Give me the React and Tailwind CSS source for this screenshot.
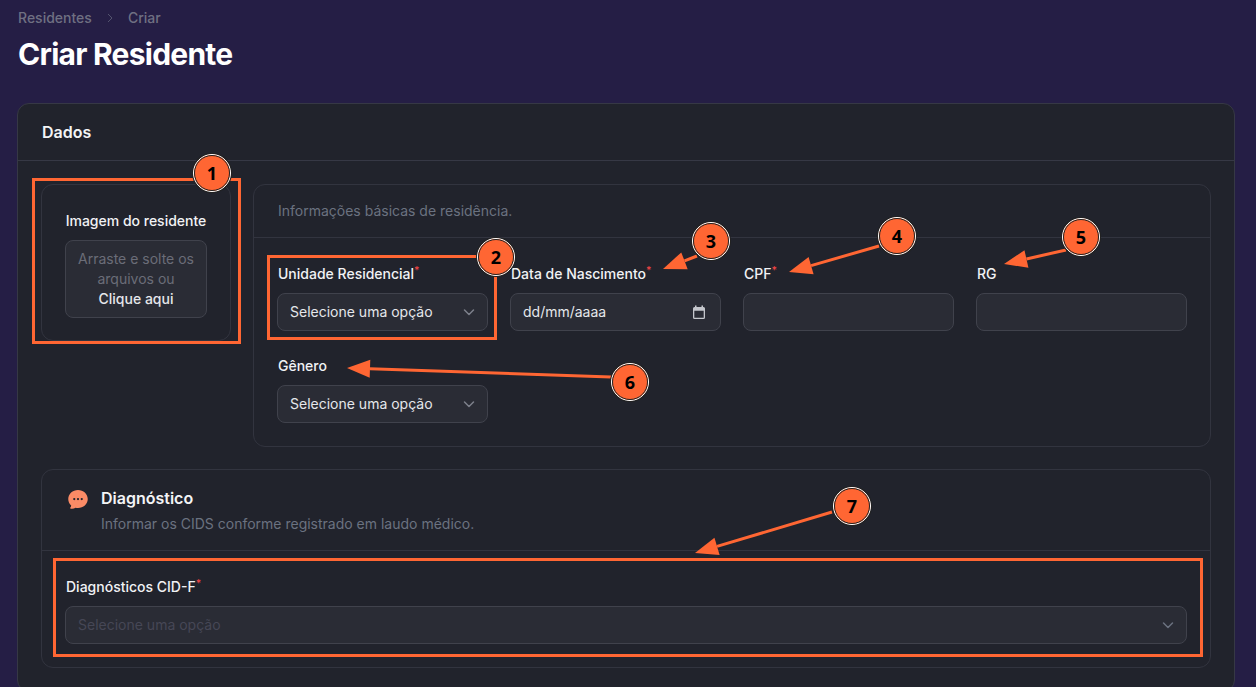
import { HiChatBubbleOvalLeftEllipsis } from "react-icons/hi2";

const ORANGE = "#ff6633";

// Annotation data, coordinates are page pixels
const ARROWS = [
  [697, 256, 663, 269],
  [879, 246, 789, 272],
  [1066, 250, 1004, 264],
  [611, 377, 347, 368],
  [832, 512, 695, 553],
];

const BADGES = [
  { n: 1, x: 212, y: 173 },
  { n: 2, x: 496, y: 257 },
  { n: 3, x: 711, y: 241 },
  { n: 4, x: 897, y: 236 },
  { n: 5, x: 1081, y: 237 },
  { n: 6, x: 630, y: 382 },
  { n: 7, x: 852, y: 506 },
];

function Chevron({ className }) {
  return (
    <svg width="20" height="20" viewBox="0 0 20 20" fill="none" className={className}>
      <path d="M5.5 8l4.5 4.5L14.5 8" stroke="currentColor" strokeWidth="1.5" strokeLinecap="round" strokeLinejoin="round" />
    </svg>
  );
}

function Label({ children, required }) {
  return (
    <div className="pl-px pt-px h-5 text-sm leading-5 font-medium text-[#f1f2f5] whitespace-nowrap">
      {children}
      {required && <sup className="text-[#ef4444] font-medium">*</sup>}
    </div>
  );
}

function Select({ placeholder }) {
  return (
    <div className="mt-[10px] h-[38px] flex items-center justify-between pl-3 pr-2 rounded-lg border border-[#40424c] bg-[#2a2c35]">
      <span className={`text-sm ${placeholder ? "text-[#464755]" : "text-[#e5e7eb]"}`}>Selecione uma opção</span>
      <Chevron className={placeholder ? "text-[#6b7280]" : "text-[#7d808b]"} />
    </div>
  );
}

function DateField() {
  return (
    <div className="mt-[10px] h-[38px] flex items-center justify-between pl-3 pr-[14px] rounded-lg border border-[#40424c] bg-[#2a2c35]">
      <span className="text-sm text-[#e5e7eb]">dd/mm/aaaa</span>
      <svg width="14" height="16" viewBox="0 0 14 16" fill="#c4c6cc">
        <path fillRule="evenodd" d="M3 1.5h1.5V3h5V1.5H11V3h.5A1.5 1.5 0 0 1 13 4.5v9a1.5 1.5 0 0 1-1.5 1.5h-9A1.5 1.5 0 0 1 1 13.5v-9A1.5 1.5 0 0 1 2.500 3H3V1.500Zm-.7 5.300v6.900h9.400V6.800H2.300Z" />
      </svg>
    </div>
  );
}

function TextField() {
  return <div className="mt-[10px] h-[38px] rounded-lg border border-[#40424c] bg-[#2a2c35]" />;
}

function Arrow({ from }) {
  const [x1, y1, x2, y2] = from;
  const len = Math.hypot(x2 - x1, y2 - y1);
  const ux = (x2 - x1) / len;
  const uy = (y2 - y1) / len;
  const bx = x2 - ux * 23;
  const by = y2 - uy * 23;
  const pts = `${x2},${y2} ${bx - uy * 9},${by + ux * 9} ${bx + uy * 9},${by - ux * 9}`;
  return (
    <g>
      <line x1={x1} y1={y1} x2={bx} y2={by} stroke={ORANGE} strokeWidth="3" />
      <polygon points={pts} fill={ORANGE} />
    </g>
  );
}

export default function App() {
  return (
    <div className="relative h-[687px] overflow-hidden bg-[#251e45] font-['Inter','Noto_Sans',sans-serif]">
      <main className="pl-[17px] pr-[21px] pt-2">
        <nav className="pl-px h-5 flex items-center text-sm font-medium text-[#6f7082]">
          <span>Residentes</span>
          <svg width="16" height="16" viewBox="0 0 20 20" fill="none" className="mx-[10px] text-[#565670]">
            <path d="M7.5 5l5 5-5 5" stroke="currentColor" strokeWidth="1.2" />
          </svg>
          <span>Criar</span>
        </nav>
        <h1 className="pl-px mt-2 text-3xl leading-9 font-bold tracking-tight text-white">Criar Residente</h1>

        <section className="mt-[31px] rounded-xl border border-[#363845] bg-[#21232c]">
          <div className="h-[57px] flex items-center px-6 border-b border-[#363845]">
            <h2 className="text-base font-semibold text-[#f3f4f6]">Dados</h2>
          </div>

          <div className="p-[23px]">
            <div className="flex items-start gap-[22px]">
              {/* image upload */}
              <div className="w-[190px] h-[157px] shrink-0 rounded-xl border border-[#32343f] px-[23px] pt-[26px]">
                <div className="h-5 text-sm leading-5 font-medium text-[#f1f2f5] text-center whitespace-nowrap">Imagem do residente</div>
                <div className="mt-[9px] h-[78px] rounded-lg border border-[#40424c] bg-[#2a2c35] flex flex-col justify-center text-center text-sm leading-5 text-[#6b6d78]">
                  <div>Arraste e solte os</div>
                  <div>arquivos ou</div>
                  <div className="font-medium text-[#e5e7eb]">Clique aqui</div>
                </div>
              </div>

              {/* basic info */}
              <div className="flex-1 h-[263px] rounded-xl border border-[#32343f]">
                <div className="h-[53px] flex items-center px-6 border-b border-[#32343f]">
                  <p className="text-sm text-[#6b7280]">Informações básicas de residência.</p>
                </div>
                <div className="px-[23px] pt-[25px] grid grid-cols-4 gap-x-[22px] gap-y-6">
                  <div>
                    <Label required>Unidade Residencial</Label>
                    <Select />
                  </div>
                  <div>
                    <Label required>Data de Nascimento</Label>
                    <DateField />
                  </div>
                  <div>
                    <Label required>CPF</Label>
                    <TextField />
                  </div>
                  <div>
                    <Label>RG</Label>
                    <TextField />
                  </div>
                  <div>
                    <Label>Gênero</Label>
                    <Select />
                  </div>
                </div>
              </div>
            </div>

            {/* diagnostico */}
            <div className="mt-[22px] rounded-xl border border-[#32343f]">
              <div className="h-[81px] flex items-start gap-[11px] pl-[24px] pt-[16px] border-b border-[#32343f]">
                <HiChatBubbleOvalLeftEllipsis size={24} className="text-[#fb8b66] mt-px shrink-0" />
                <div>
                  <h3 className="text-base leading-6 font-semibold text-[#f3f4f6]">Diagnóstico</h3>
                  <p className="mt-1 text-sm leading-5 text-[#6b7280]">Informar os CIDS conforme registrado em laudo médico.</p>
                </div>
              </div>
              <div className="px-[23px] pt-[25px] pb-[23px]">
                <Label required>Diagnósticos CID-F</Label>
                <Select placeholder />
              </div>
            </div>
          </div>
        </section>
      </main>

      {/* annotations drawn over the screenshot */}
      <div className="absolute left-[32px] top-[178px] w-[209px] h-[166px] border-[3px] border-[#ff6633]" />
      <div className="absolute left-[267px] top-[255px] w-[230px] h-[85px] border-[3px] border-[#ff6633]" />
      <div className="absolute left-[53px] top-[558px] w-[1150px] h-[99px] border-[3px] border-[#ff6633]" />

      <svg width="1256" height="687" className="absolute left-0 top-0 pointer-events-none">
        {ARROWS.map((a) => (
          <Arrow key={a.join("-")} from={a} />
        ))}
      </svg>

      {BADGES.map((b) => (
        <div
          key={b.n}
          className="absolute w-[38px] h-[38px] -ml-[19px] -mt-[19px] rounded-full bg-[#ff6633] border-[1.5px] border-white shadow-[0_0_0_1px_#222] flex items-center justify-center text-[18px] font-bold text-black font-['Open_Sans',sans-serif]"
          style={{ left: b.x, top: b.y }}
        >
          <span className="absolute inset-0 rounded-full border border-[#222]" />
          {b.n}
        </div>
      ))}
    </div>
  );
}
